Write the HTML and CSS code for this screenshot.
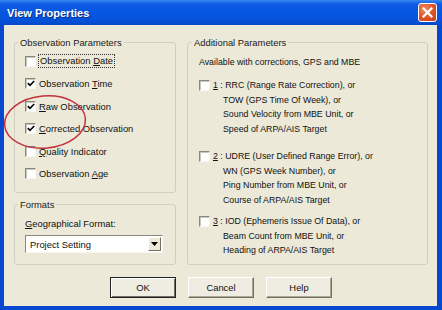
FILE: index.html
```html
<!DOCTYPE html>
<html>
<head>
  <meta charset="UTF-8">
  <title>View Properties</title>
  <link rel="stylesheet" href="styles.css">
</head>
<body>
  <div class="window">
    <div class="titlebar">
      <span class="title">View Properties</span>
      <span class="close">
        <svg width="11" height="11" viewBox="0 0 11 11"><path d="M1.5 1.5 L9.5 9.5 M9.5 1.5 L1.5 9.5" stroke="#fff" stroke-width="2.2" stroke-linecap="square"/></svg>
      </span>
    </div>

    <div class="client">
      <div class="panes">
        <div class="left">
          <fieldset class="group obs">
            <legend>Observation Parameters</legend>
            <div class="rows">
              <div class="check"><span class="box"></span><span class="focus">Observation <u>D</u>ate</span></div>
              <div class="check"><span class="box on"><svg width="8" height="7" viewBox="0 0 8 7"><polyline points="0.8,3.2 3,5.4 7.2,1" fill="none" stroke="#000" stroke-width="1.7"/></svg></span><span>Observation <u>T</u>ime</span></div>
              <div class="check"><span class="box on"><svg width="8" height="7" viewBox="0 0 8 7"><polyline points="0.8,3.2 3,5.4 7.2,1" fill="none" stroke="#000" stroke-width="1.7"/></svg></span><span><u>R</u>aw Observation</span></div>
              <div class="check"><span class="box on"><svg width="8" height="7" viewBox="0 0 8 7"><polyline points="0.8,3.2 3,5.4 7.2,1" fill="none" stroke="#000" stroke-width="1.7"/></svg></span><span><u>C</u>orrected Observation</span></div>
              <div class="check"><span class="box"></span><span><u>Q</u>uality Indicator</span></div>
              <div class="check"><span class="box"></span><span>Observation <u>A</u>ge</span></div>
            </div>
          </fieldset>

          <fieldset class="group formats">
            <legend>Formats</legend>
            <div class="formats-body">
              <div class="field-label"><u>G</u>eographical Format:</div>
              <div class="select">
                <span class="value">Project Setting</span>
                <span class="arrow"><svg width="7" height="4" viewBox="0 0 7 4"><path d="M0 0 H7 L3.5 4 Z" fill="#000"/></svg></span>
              </div>
            </div>
          </fieldset>
        </div>

        <fieldset class="group additional">
          <legend>Additional Parameters</legend>
          <div class="add-body">
            <div class="note">Available with corrections, GPS and MBE</div>
            <div class="option opt1">
              <span class="box"></span>
              <div class="lines">
                <div><u>1</u> : RRC (Range Rate Correction), or</div>
                <div class="indent">TOW (GPS Time Of Week), or</div>
                <div class="indent">Sound Velocity from MBE Unit, or</div>
                <div class="indent">Speed of ARPA/AIS Target</div>
              </div>
            </div>
            <div class="option opt2">
              <span class="box"></span>
              <div class="lines">
                <div><u>2</u> : UDRE (User Defined Range Error), or</div>
                <div class="indent">WN (GPS Week Number), or</div>
                <div class="indent">Ping Number from MBE Unit, or</div>
                <div class="indent">Course of ARPA/AIS Target</div>
              </div>
            </div>
            <div class="option opt3">
              <span class="box"></span>
              <div class="lines">
                <div><u>3</u> : IOD (Ephemeris Issue Of Data), or</div>
                <div class="indent">Beam Count from MBE Unit, or</div>
                <div class="indent">Heading of ARPA/AIS Target</div>
              </div>
            </div>
          </div>
        </fieldset>
      </div>

      <div class="buttons">
        <div class="btn default">OK</div>
        <div class="btn">Cancel</div>
        <div class="btn">Help</div>
      </div>

      <!-- red marker drawn over the dialog -->
      <svg class="marker" width="86" height="60" viewBox="0 0 86 60">
        <ellipse cx="43" cy="30" rx="40.5" ry="26" fill="none" stroke="#c4323c" stroke-width="1.5" transform="rotate(-5 43 30)"/>
      </svg>
    </div>
  </div>
</body>
</html>
```

FILE: styles.css
```css
body {
  margin: 0;
  background: #fff;
}

.window {
  width: 442px;
  height: 310px;
  display: flex;
  flex-direction: column;
  background: #0847cf;
  font-family: "Liberation Sans", Arial, sans-serif;
  font-size: 9.4px;
  color: #111;
}

/* title bar */
.titlebar {
  height: 25px;
  display: flex;
  align-items: center;
  justify-content: space-between;
  padding: 0 5px 0 7px;
  background: linear-gradient(to bottom, #3a87f2 0px, #0d5be3 4px, #0655e0 14px, #0450d6 22px, #0a47c4 25px);
}
.title {
  color: #fff;
  font-weight: bold;
  font-size: 11px;
  text-shadow: 1px 1px 0 #0a2f8a;
}
.close {
  width: 19px;
  height: 19px;
  box-sizing: border-box;
  border: 1px solid #fff;
  border-radius: 3px;
  background: radial-gradient(circle at 35% 30%, #f0875e 0%, #df5127 55%, #c4401c 100%);
  display: flex;
  align-items: center;
  justify-content: center;
}

/* client area */
.client {
  flex: 1;
  margin: 0 5px 4px 4px;
  background: #ece9d8;
  padding: 12px 9px 0 10px;
  position: relative;
}
.panes {
  display: flex;
  gap: 11px;
}
.left {
  width: 162px;
  display: flex;
  flex-direction: column;
  gap: 6px;
}

/* group boxes */
.group {
  margin: 0;
  padding: 0;
  border: 1px solid #d0d0bf;
  border-radius: 3px;
  min-width: 0;
}
.group legend {
  margin-left: 3px;
  padding: 0 2px;
  line-height: 11px;
  color: #1a1a1a;
}
.additional {
  flex: 1;
}
.additional legend {
  margin-left: 4px;
}

.rows {
  padding: 2px 0 7px 10px;
}
.check {
  height: 22.5px;
  display: flex;
  align-items: center;
  gap: 3px;
}
.focus {
  outline: 1px dotted #333;
  outline-offset: 0px;
  padding: 0 1px;
  line-height: 12px;
}

/* checkbox */
.box {
  width: 11px;
  height: 11px;
  box-sizing: border-box;
  flex: none;
  background: #fff;
  border: 1px solid;
  border-color: #8a897e #f7f6f1 #f7f6f1 #8a897e;
  box-shadow: inset 1px 1px 0 #c9c7ba;
  display: flex;
  align-items: center;
  justify-content: center;
}

/* formats */
.formats-body {
  padding: 8px 0 11px 10px;
}
.field-label {
  line-height: 11px;
}
.select {
  margin-top: 6px;
  width: 138px;
  height: 18px;
  box-sizing: border-box;
  background: #fff;
  border: 1px solid;
  border-color: #8a897e #f7f6f1 #f7f6f1 #8a897e;
  display: flex;
  align-items: center;
  justify-content: space-between;
  padding: 1px;
}
.value {
  padding-left: 3px;
}
.arrow {
  width: 13px;
  height: 14px;
  box-sizing: border-box;
  background: #ece9d8;
  border: 1px solid;
  border-color: #fff #716f64 #716f64 #fff;
  display: flex;
  align-items: center;
  justify-content: center;
}

/* additional parameters */
.add-body {
  padding: 9px 0 0 11px;
  font-size: 8.8px;
}
.note {
  line-height: 11px;
}
.option {
  display: flex;
  align-items: flex-start;
  gap: 3px;
  margin-top: 10px;
}
.option .box {
  margin-top: 2px;
}
.opt2 {
  margin-top: 13px;
}
.opt3 {
  margin-top: 7px;
}
.lines div {
  line-height: 14.5px;
  white-space: nowrap;
}
.lines .indent {
  padding-left: 10px;
}

/* buttons */
.buttons {
  display: flex;
  justify-content: center;
  gap: 12px;
  margin-top: 12px;
}
.btn {
  width: 66px;
  height: 21px;
  box-sizing: border-box;
  display: flex;
  align-items: center;
  justify-content: center;
  background: #efede2;
  border: 1px solid;
  border-color: #fff #716f64 #716f64 #fff;
  box-shadow: inset -1px -1px 0 #aca899;
}
.btn.default {
  border-color: #222;
  box-shadow: inset 1px 1px 0 #fff, inset -1px -1px 0 #716f64;
}

.marker {
  position: absolute;
  left: -2px;
  top: 67px;
}
```
